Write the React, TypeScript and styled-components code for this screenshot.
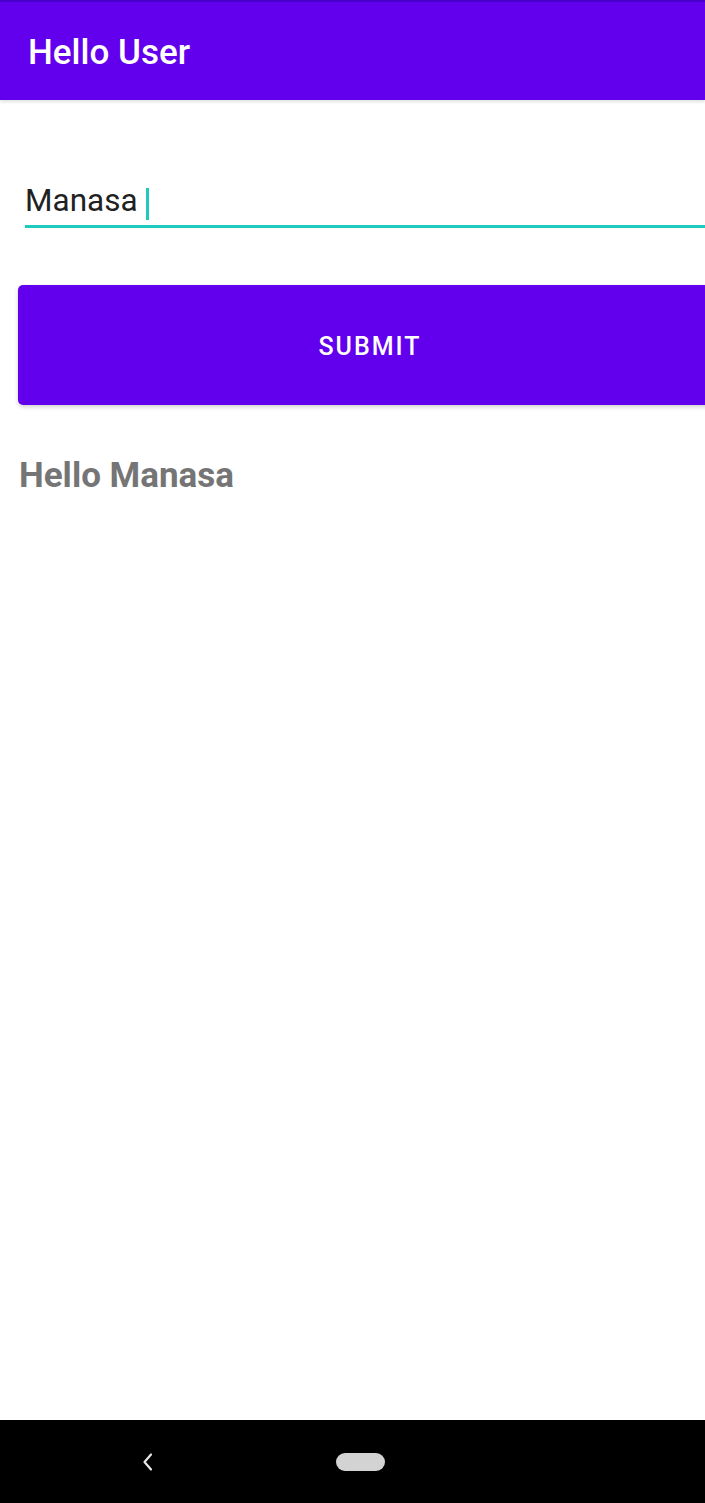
import React from "react";
import styled, { createGlobalStyle } from "styled-components";

const Global = createGlobalStyle`
  html, body { margin: 0; padding: 0; background: #ffffff; overflow: hidden; }
  body { font-family: Roboto, "Noto Sans", sans-serif; }
`;

const Screen = styled.div`
  width: 705px;
  height: 1503px;
  display: flex;
  flex-direction: column;
  overflow: hidden;
  background: #ffffff;
`;

const StatusStrip = styled.div`
  height: 2px;
  background: #4a00cc;
  flex: none;
`;

const AppBar = styled.header`
  height: 98px;
  flex: none;
  background: #6200ee;
  display: flex;
  align-items: center;
  padding-left: 28px;
  box-shadow: 0 2px 3px rgba(0, 0, 0, 0.12);
  position: relative;
  z-index: 1;
`;

const Title = styled.h1`
  margin: 0;
  color: #ffffff;
  font-family: Roboto, sans-serif;
  font-weight: 500;
  font-size: 35px;
  letter-spacing: 0;
  padding-top: 2px;
`;

const Content = styled.main`
  flex: 1;
  display: flex;
  flex-direction: column;
  padding: 80px 0 0 18px;
  min-width: 0;
`;

const Field = styled.div`
  margin-left: 7px;
  width: 720px;
  height: 45px;
  border-bottom: 3px solid #1ecbbf;
  display: flex;
  align-items: flex-start;
  gap: 8px;
`;

const FieldText = styled.span`
  font-family: Roboto, sans-serif;
  font-size: 31.5px;
  color: #212121;
  line-height: 42px;
`;

const Caret = styled.span`
  width: 3px;
  height: 32px;
  margin-top: 8px;
  background: #1ecbbf;
`;

const SubmitButton = styled.button`
  margin-top: 57px;
  width: 704px;
  height: 120px;
  flex: none;
  border: none;
  border-radius: 5px;
  background: #6200ee;
  color: #ffffff;
  font-family: Roboto, sans-serif;
  font-weight: 500;
  font-size: 25px;
  letter-spacing: 2px;
  box-shadow: 0 2px 4px rgba(0, 0, 0, 0.18);
  padding: 2px 0 0;
`;

const Greeting = styled.p`
  margin: 50px 0 0 1px;
  font-family: Roboto, sans-serif;
  font-weight: 700;
  font-size: 35px;
  color: #757575;
`;

const NavBar = styled.nav`
  height: 83px;
  flex: none;
  background: #000000;
  display: flex;
  align-items: center;
  position: relative;
`;

const BackButton = styled.div`
  margin-left: 138px;
  width: 20px;
  height: 24px;
  display: flex;
  align-items: center;
  justify-content: center;
`;

const HomePill = styled.div`
  margin-left: 178px;
  width: 49px;
  height: 18px;
  border-radius: 9px;
  background: #d3d3d3;
`;

export default function App() {
  return (
    <>
      <Global />
      <Screen>
        <StatusStrip />
        <AppBar>
          <Title>Hello User</Title>
        </AppBar>
        <Content>
          <Field>
            <FieldText>Manasa</FieldText>
            <Caret />
          </Field>
          <SubmitButton>SUBMIT</SubmitButton>
          <Greeting>Hello Manasa</Greeting>
        </Content>
        <NavBar>
          <BackButton>
            <svg width="14" height="22" viewBox="0 0 14 22" fill="none">
              <path d="M10 3.5 L3.5 11 L10 18.5" stroke="#e6e6e6" strokeWidth="2.2" strokeLinecap="round" strokeLinejoin="round" />
            </svg>
          </BackButton>
          <HomePill />
        </NavBar>
      </Screen>
    </>
  );
}
